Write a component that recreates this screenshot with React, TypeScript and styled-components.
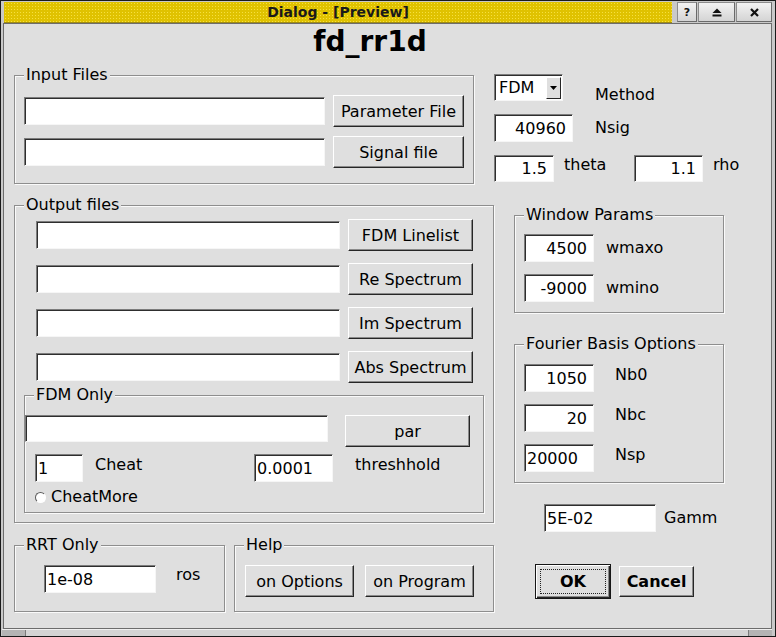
import React from "react";
import styled, { createGlobalStyle } from "styled-components";

const BG = "#dfdfdf";

const GlobalStyle = createGlobalStyle`
  html, body { margin: 0; padding: 0; background: ${BG}; }
  body { font-family: "DejaVu Sans", "Liberation Sans", sans-serif; font-size: 16px; color: #000; }
  *, *::before, *::after { box-sizing: border-box; }
`;

const Window = styled.div`
  width: 776px;
  height: 637px;
  border: 1px solid #1a1a1a;
  background: #c9c9c9;
  padding: 1px 3px 0 2px;
  display: flex;
  flex-direction: column;
`;

const TitleBar = styled.div`
  height: 21px;
  flex-shrink: 0;
  display: flex;
  padding-left: 1px;
`;

const Caption = styled.div`
  flex: 1;
  display: flex;
  align-items: center;
  justify-content: center;
  font-size: 14px;
  font-weight: bold;
  color: #1a1a1a;
  background-color: #e0c200;
  background-image: radial-gradient(circle, #f6e040 0.7px, transparent 1px);
  background-size: 3px 3px;
  border-bottom: 1px solid #a08c10;
`;

const TitleButtons = styled.div`
  display: flex;
  gap: 1px;
  padding-left: 5px;
`;

const TitleButton = styled.div<{ $w: number }>`
  width: ${(p) => p.$w}px;
  height: 20px;
  display: flex;
  align-items: center;
  justify-content: center;
  background: linear-gradient(#f2f2f2, #d4d4d4);
  border: 1px solid #8c8c8c;
  border-right-color: #6a6a6a;
  border-bottom-color: #6a6a6a;
  font-size: 11px;
  font-weight: bold;
  color: #111;
`;

const Body = styled.div`
  flex: 1;
  background: ${BG};
  border: 1px solid #6c6c6c;
  padding: 2px 0 0 10px;
  display: flex;
  flex-direction: column;
`;

const Heading = styled.div`
  font-size: 28px;
  font-weight: bold;
  line-height: 32px;
  text-align: center;
  padding-right: 45px;
`;

const Main = styled.div`
  display: flex;
  align-items: flex-start;
  margin-top: 8px;
`;

const LeftCol = styled.div`
  width: 480px;
  display: flex;
  flex-direction: column;
`;

const RightCol = styled.div`
  display: flex;
  flex-direction: column;
  padding-top: 8px;
`;

const Group = styled.fieldset<{ $w: number; $mt?: number; $ml?: number }>`
  margin: ${(p) => p.$mt ?? 0}px 0 0 ${(p) => p.$ml ?? 0}px;
  padding: 0;
  min-width: 0;
  width: ${(p) => p.$w}px;
  border: 1px solid #8e8e8e;
  box-shadow: 1px 1px 0 #fafafa, inset 1px 1px 0 #fafafa;
`;

const Legend = styled.legend`
  margin-left: 9px;
  padding: 0 2px;
  font-size: 16px;
  line-height: 18px;
  background: ${BG};
`;

const GroupBody = styled.div<{ $pad: string }>`
  padding: ${(p) => p.$pad};
  display: flex;
  flex-direction: column;
`;

const Row = styled.div<{ $gap?: number; $mt?: number; $pl?: number; $align?: string }>`
  display: flex;
  align-items: ${(p) => p.$align ?? "center"};
  gap: ${(p) => p.$gap ?? 0}px;
  margin-top: ${(p) => p.$mt ?? 0}px;
  padding-left: ${(p) => p.$pl ?? 0}px;
`;

const Field = styled.input<{ $w: number; $h?: number; $right?: boolean }>`
  width: ${(p) => p.$w}px;
  height: ${(p) => p.$h ?? 28}px;
  flex-shrink: 0;
  margin: 0;
  background: #fff;
  border: 1px solid;
  border-color: #7c7c7c #f6f6f6 #f6f6f6 #7c7c7c;
  box-shadow: inset 1px 1px 0 #2e2e2e;
  font-family: inherit;
  font-size: 16px;
  color: #000;
  text-align: ${(p) => (p.$right ? "right" : "left")};
  padding: 0 6px 0 2px;
  outline: none;
  border-radius: 0;
`;

const Button = styled.button<{ $w: number; $h?: number; $bold?: boolean }>`
  width: ${(p) => p.$w}px;
  height: ${(p) => p.$h ?? 32}px;
  flex-shrink: 0;
  margin: 0;
  padding: 0;
  background: ${BG};
  border: 1px solid;
  border-color: #ffffff #262626 #262626 #ffffff;
  box-shadow: inset -1px -1px 0 #8a8a8a;
  font-family: inherit;
  font-size: 16px;
  font-weight: ${(p) => (p.$bold ? "bold" : "normal")};
  color: #000;
  border-radius: 0;
`;

const DefaultButton = styled.button<{ $w: number; $h: number }>`
  width: ${(p) => p.$w}px;
  height: ${(p) => p.$h}px;
  flex-shrink: 0;
  margin: 0;
  padding: 4px;
  display: flex;
  background: ${BG};
  border: 1px solid #161616;
  box-shadow: inset 1px 1px 0 #ffffff, inset -1px -1px 0 #262626, inset -2px -2px 0 #8a8a8a;
  font-family: inherit;
  font-size: 16px;
  font-weight: bold;
  color: #000;
  border-radius: 0;
`;

const FocusRect = styled.span`
  flex: 1;
  display: flex;
  align-items: center;
  justify-content: center;
  border: 1px dotted #222;
`;

const Label = styled.span<{ $w?: number; $mt?: number; $ml?: number }>`
  display: block;
  line-height: 18px;
  white-space: nowrap;
  width: ${(p) => (p.$w ? `${p.$w}px` : "auto")};
  margin-top: ${(p) => p.$mt ?? 0}px;
  margin-left: ${(p) => p.$ml ?? 0}px;
  align-self: ${(p) => (p.$mt !== undefined ? "flex-start" : "auto")};
  flex-shrink: 0;
`;

const Combo = styled.div`
  width: 69px;
  height: 27px;
  background: #fff;
  border: 1px solid;
  border-color: #7c7c7c #f6f6f6 #f6f6f6 #7c7c7c;
  box-shadow: inset 1px 1px 0 #2e2e2e;
  display: flex;
  align-items: center;
  justify-content: space-between;
  padding: 1px 1px 0 4px;
  line-height: 18px;
`;

const ComboArrow = styled.span`
  width: 15px;
  height: 22px;
  background: ${BG};
  border: 1px solid;
  border-color: #ffffff #262626 #262626 #ffffff;
  display: flex;
  align-items: center;
  justify-content: center;
`;

const Radio = styled.span`
  width: 11px;
  height: 11px;
  border-radius: 50%;
  background: #fff;
  border: 1px solid;
  border-color: #5a5a5a #ffffff #ffffff #5a5a5a;
  flex-shrink: 0;
`;

const BottomFrame = styled.div`
  height: 7px;
  flex-shrink: 0;
  display: flex;
  border-top: 1px solid #efefef;
  margin-left: -1px;
`;

const Grip = styled.div<{ $side: "left" | "right" }>`
  width: 24px;
  background: #b4b4b4;
  ${(p) => (p.$side === "left" ? "border-right: 1px solid #7a7a7a;" : "border-left: 1px solid #7a7a7a;")}
`;

const FrameMid = styled.div`
  flex: 1;
  background: #d4d4d4;
`;

export default function App() {
  return (
    <>
      <GlobalStyle />
      <Window>
        <TitleBar>
          <Caption>Dialog - [Preview]</Caption>
          <TitleButtons>
            <TitleButton $w={20}>?</TitleButton>
            <TitleButton $w={37}>
              <svg width="10" height="9" viewBox="0 0 10 9">
                <polygon points="0.5,5 5,0.5 9.5,5" fill="#111" />
                <rect x="0.5" y="6.5" width="9" height="2" fill="#111" />
              </svg>
            </TitleButton>
            <TitleButton $w={36}>
              <svg width="9" height="9" viewBox="0 0 9 9">
                <path d="M1 1 L8 8 M8 1 L1 8" stroke="#111" strokeWidth="2.2" />
              </svg>
            </TitleButton>
          </TitleButtons>
        </TitleBar>
        <Body>
          <Heading>fd_rr1d</Heading>
          <Main>
            <LeftCol>
              <Group $w={460}>
                <Legend>Input Files</Legend>
                <GroupBody $pad="11px 0 15px 9px">
                  <Row $gap={8}>
                    <Field $w={301} readOnly />
                    <Button $w={131}>Parameter File</Button>
                  </Row>
                  <Row $gap={8} $mt={9}>
                    <Field $w={301} readOnly />
                    <Button $w={131}>Signal file</Button>
                  </Row>
                </GroupBody>
              </Group>

              <Group $w={480} $mt={12}>
                <Legend>Output files</Legend>
                <GroupBody $pad="5px 9px 9px 9px">
                  <Row $gap={8} $pl={12}>
                    <Field $w={304} readOnly />
                    <Button $w={125}>FDM Linelist</Button>
                  </Row>
                  <Row $gap={8} $pl={12} $mt={12}>
                    <Field $w={304} readOnly />
                    <Button $w={125}>Re Spectrum</Button>
                  </Row>
                  <Row $gap={8} $pl={12} $mt={12}>
                    <Field $w={304} readOnly />
                    <Button $w={125}>Im Spectrum</Button>
                  </Row>
                  <Row $gap={8} $pl={12} $mt={12}>
                    <Field $w={304} readOnly />
                    <Button $w={125}>Abs Spectrum</Button>
                  </Row>

                  <Group $w={460} $mt={3}>
                    <Legend>FDM Only</Legend>
                    <GroupBody $pad="11px 0 6px 0">
                      <Row $gap={17} $align="flex-start">
                        <Field $w={303} $h={27} readOnly />
                        <Button $w={125}>par</Button>
                      </Row>
                      <Row $mt={7} $pl={10} $align="flex-start">
                        <Field $w={48} readOnly defaultValue="1" />
                        <Label $ml={12} $w={159} $mt={2}>Cheat</Label>
                        <Field $w={79} readOnly defaultValue="0.0001" />
                        <Label $ml={22} $mt={2}>threshhold</Label>
                      </Row>
                      <Row $mt={6} $pl={10}>
                        <Radio />
                        <Label $ml={5}>CheatMore</Label>
                      </Row>
                    </GroupBody>
                  </Group>
                </GroupBody>
              </Group>

              <Row $gap={9} $mt={13} $align="flex-start">
                <Group $w={211}>
                  <Legend>RRT Only</Legend>
                  <GroupBody $pad="11px 0 18px 29px">
                    <Row $align="flex-start">
                      <Field $w={112} readOnly defaultValue="1e-08" />
                      <Label $ml={20} $mt={1}>ros</Label>
                    </Row>
                  </GroupBody>
                </Group>
                <Group $w={260}>
                  <Legend>Help</Legend>
                  <GroupBody $pad="11px 0 14px 10px">
                    <Row $gap={11}>
                      <Button $w={109}>on Options</Button>
                      <Button $w={109}>on Program</Button>
                    </Row>
                  </GroupBody>
                </Group>
              </Row>
            </LeftCol>

            <RightCol>
              <Row $gap={32} $align="flex-start">
                <Combo>
                  <span>FDM</span>
                  <ComboArrow>
                    <svg width="7" height="4" viewBox="0 0 7 4">
                      <polygon points="0,0 7,0 3.5,4" fill="#000" />
                    </svg>
                  </ComboArrow>
                </Combo>
                <Label $mt={12}>Method</Label>
              </Row>
              <Row $mt={10}>
                <Field $w={79} $right readOnly defaultValue="40960" />
                <Label $ml={22}>Nsig</Label>
              </Row>
              <Row $mt={13} $align="flex-start">
                <Field $w={60} $h={27} $right readOnly defaultValue="1.5" />
                <Label $ml={10} $w={70} $mt={1}>theta</Label>
                <Field $w={69} $h={27} $right readOnly defaultValue="1.1" />
                <Label $ml={10} $mt={1}>rho</Label>
              </Row>

              <Group $w={210} $mt={24} $ml={20}>
                <Legend>Window Params</Legend>
                <GroupBody $pad="10px 0 10px 9px">
                  <Row>
                    <Field $w={70} $right readOnly defaultValue="4500" />
                    <Label $ml={12}>wmaxo</Label>
                  </Row>
                  <Row $mt={12}>
                    <Field $w={70} $right readOnly defaultValue="-9000" />
                    <Label $ml={12}>wmino</Label>
                  </Row>
                </GroupBody>
              </Group>

              <Group $w={210} $mt={22} $ml={20}>
                <Legend>Fourier Basis Options</Legend>
                <GroupBody $pad="11px 0 10px 9px">
                  <Row $align="flex-start">
                    <Field $w={70} $right readOnly defaultValue="1050" />
                    <Label $ml={21} $mt={2}>Nb0</Label>
                  </Row>
                  <Row $mt={12} $align="flex-start">
                    <Field $w={70} $right readOnly defaultValue="20" />
                    <Label $ml={21} $mt={2}>Nbc</Label>
                  </Row>
                  <Row $mt={12} $align="flex-start">
                    <Field $w={70} readOnly defaultValue="20000" />
                    <Label $ml={21} $mt={2}>Nsp</Label>
                  </Row>
                </GroupBody>
              </Group>

              <Row $mt={21} $pl={50}>
                <Field $w={112} readOnly defaultValue="5E-02" />
                <Label $ml={8}>Gamm</Label>
              </Row>

              <Row $mt={32} $pl={41} $gap={8}>
                <DefaultButton $w={76} $h={35}>
                  <FocusRect>OK</FocusRect>
                </DefaultButton>
                <Button $w={75} $h={31} $bold>Cancel</Button>
              </Row>
            </RightCol>
          </Main>
        </Body>
        <BottomFrame>
          <Grip $side="left" />
          <FrameMid />
          <Grip $side="right" />
        </BottomFrame>
      </Window>
    </>
  );
}
